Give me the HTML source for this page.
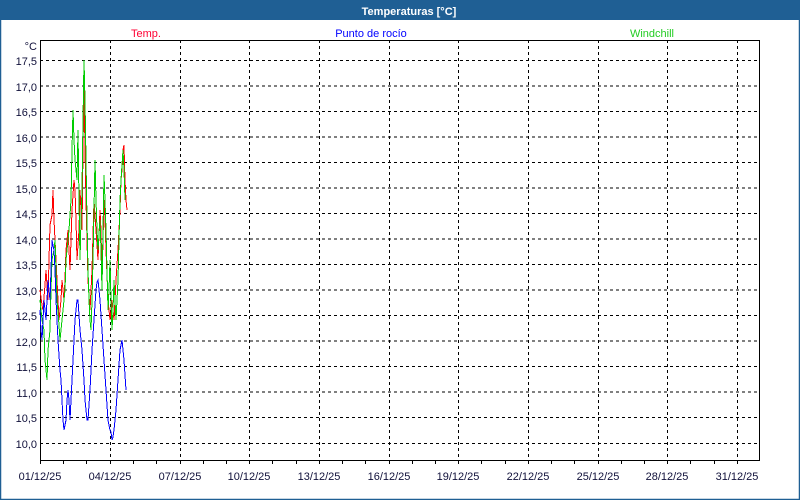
<!DOCTYPE html>
<html><head><meta charset="utf-8"><style>
html,body{margin:0;padding:0;width:800px;height:500px;overflow:hidden;background:#fff}
svg{display:block}
text{font-family:"Liberation Sans",sans-serif;font-size:11px}
</style></head><body>
<svg width="800" height="500" viewBox="0 0 800 500" xmlns="http://www.w3.org/2000/svg">
<rect x="0" y="0" width="800" height="500" fill="#fff"/>
<rect x="0.5" y="0.5" width="799" height="499" fill="none" stroke="#1f5f94" stroke-width="1.5"/>
<rect x="0" y="0" width="800" height="20" fill="#1f5f94"/>
<text x="409" y="15" text-anchor="middle" fill="#fff" font-weight="bold">Temperaturas [°C]</text>
<text x="146" y="37" text-anchor="middle" fill="#ff0033">Temp.</text>
<text x="371" y="37" text-anchor="middle" fill="#0000ff">Punto de rocío</text>
<text x="652" y="37" text-anchor="middle" fill="#22cc22">Windchill</text>
<g stroke="#000" stroke-width="1" stroke-dasharray="3,3" fill="none">
<path d="M40 60.5H760M40 86H760M40 111.5H760M40 137H760M40 162.5H760M40 188H760M40 213.5H760M40 239H760M40 264.5H760M40 290H760M40 315.5H760M40 341H760M40 366.5H760M40 392H760M40 417.5H760M40 443.5H760"/>
<path d="M110.5 40V460M180.5 40V460M249.5 40V460M319.5 40V460M389.5 40V460M458.5 40V460M528.5 40V460M598.5 40V460M667.5 40V460M737.5 40V460"/>
</g>
<rect x="40.5" y="40.5" width="719" height="420" fill="none" stroke="#000"/>
<g fill="#10103a" text-anchor="end">
<text x="37" y="65">17,5</text><text x="37" y="91">17,0</text><text x="37" y="116">16,5</text><text x="37" y="142">16,0</text><text x="37" y="167">15,5</text><text x="37" y="193">15,0</text><text x="37" y="218">14,5</text><text x="37" y="244">14,0</text><text x="37" y="269">13,5</text><text x="37" y="295">13,0</text><text x="37" y="320">12,5</text><text x="37" y="346">12,0</text><text x="37" y="371">11,5</text><text x="37" y="397">11,0</text><text x="37" y="422">10,5</text><text x="37" y="448">10,0</text>
<text x="37" y="50">°C</text>
</g>
<g fill="#10103a" text-anchor="middle">
<text x="40" y="480">01/12/25</text><text x="110" y="480">04/12/25</text><text x="180" y="480">07/12/25</text><text x="249" y="480">10/12/25</text><text x="319" y="480">13/12/25</text><text x="389" y="480">16/12/25</text><text x="458" y="480">19/12/25</text><text x="528" y="480">22/12/25</text><text x="598" y="480">25/12/25</text><text x="667" y="480">28/12/25</text><text x="737" y="480">31/12/25</text>
</g>
<g stroke="#000"><path d="M40.5 460V464M63.5 460V464M86.5 460V464M110.5 460V464M133.5 460V464M156.5 460V464M180.5 460V464M203.5 460V464M226.5 460V464M249.5 460V464M272.5 460V464M296.5 460V464M319.5 460V464M342.5 460V464M365.5 460V464M389.5 460V464M412.5 460V464M435.5 460V464M458.5 460V464M481.5 460V464M505.5 460V464M528.5 460V464M551.5 460V464M574.5 460V464M598.5 460V464M621.5 460V464M644.5 460V464M667.5 460V464M690.5 460V464M714.5 460V464M737.5 460V464"/></g>
<g fill="none" stroke-width="1" shape-rendering="crispEdges">
<polyline stroke="#ff0000" points="40,290 42,305 43,310 45,285 46,270 48,300 49,260 50,225 52,215 53,190 54,220 55,240 57,280 58,300 59,320 61,300 62,280 64,300 65,280 66,250 68,230 69,250 70,270 72,210 74,180 75,190 76,220 77,260 79,230 80,190 82,230 83,150 84,80 85,150 86,200 88,280 90,310 91,290 92,270 94,200 96,230 98,260 100,210 101,230 102,280 104,200 105,220 106,250 108,300 110,320 112,300 114,320 115,300 116,280 118,250 120,210 121,180 122,170 123,150 124,145 125,180 126,200 127,210"/>
<polyline stroke="#00cc00" points="40,300 42,320 44,330 45,360 47,380 48,350 50,330 51,290 52,260 54,250 55,240 56,270 57,300 59,325 60,340 62,320 63,310 65,290 66,260 68,240 69,230 70,215 71,200 72,150 73,110 74,140 75,160 76,170 77,180 78,130 79,200 80,260 81,220 82,190 83,120 84,60 85,100 86,160 87,220 88,270 89,300 90,320 91,330 92,300 93,260 94,210 95,160 96,200 97,230 98,250 100,220 101,250 102,290 103,230 104,175 105,200 106,230 107,270 108,310 109,290 110,260 111,300 112,330 113,310 114,280 115,300 116,320 117,300 118,280 119,240 120,200 121,180 122,165 123,150 124,170 125,200"/>
<polyline stroke="#0000ff" points="40,310 41,330 42,340 43,320 44,300 45,310 46,320 47,300 48,280 49,290 50,300 51,270 52,240 53,245 54,250 55,270 56,300 57,320 58,340 59,355 60,370 61,380 62,400 63,420 64,430 65,425 66,420 67,400 68,390 69,400 70,420 71,400 72,380 73,360 74,340 75,320 76,310 77,300 78,300 79,315 80,330 81,340 82,350 83,365 84,380 85,400 86,410 87,420 88,420 89,405 90,390 91,370 92,350 93,335 94,320 95,305 96,290 97,282 98,280 99,290 100,300 101,315 102,330 103,345 104,360 105,375 106,390 107,405 108,420 109,425 110,430 111,432 112,440 113,437 114,430 115,420 116,410 117,395 118,380 119,365 120,350 121,345 122,340 123,350 124,360 125,375 126,390"/>
</g>
</svg>
</body></html>
